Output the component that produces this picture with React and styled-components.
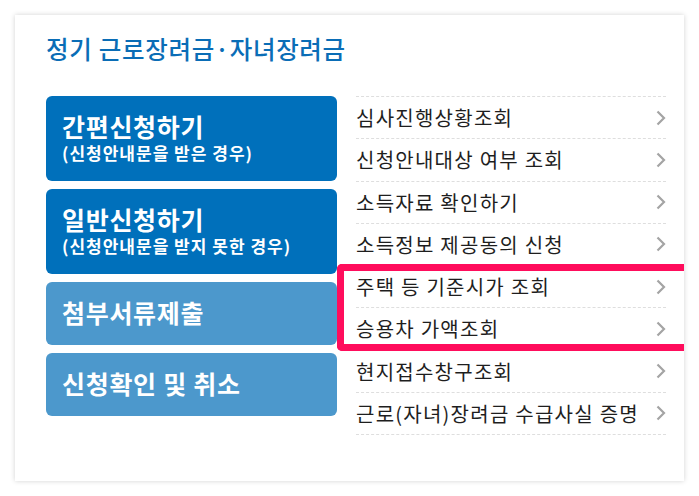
import React from "react";
import styled, { createGlobalStyle } from "styled-components";

const Global = createGlobalStyle`
  html, body { margin: 0; padding: 0; background: #ffffff; }
  body { font-family: "Noto Sans CJK KR", "Noto Sans", sans-serif; }
  * { box-sizing: border-box; }
`;

const Page = styled.div`
  width: 699px;
  height: 496px;
  padding: 15px 15px 0 15px;
`;

const Card = styled.section`
  position: relative;
  width: 669px;
  height: 466px;
  background: #fff;
  box-shadow: 0 0 5px rgba(0, 0, 0, 0.18);
  padding: 17px 18px 0 31px;
`;

const Title = styled.h2`
  margin: 0;
  font-size: 24.5px;
  font-weight: 500;
  line-height: 34px;
  color: #0a6db6;
  letter-spacing: 0.7px;
`;

const Body = styled.div`
  display: flex;
  gap: 19px;
  margin-top: 30px;
`;

const ButtonColumn = styled.div`
  width: 291px;
  display: flex;
  flex-direction: column;
  gap: 8px;
`;

const BigButton = styled.a`
  display: flex;
  flex-direction: column;
  justify-content: center;
  height: ${(p) => p.$h}px;
  padding: 0 16px 4px;
  border-radius: 6px;
  background: ${(p) => (p.$light ? "#4c98cc" : "#0070bb")};
  color: #fff;
  text-decoration: none;
`;

const ButtonTitle = styled.span`
  display: block;
  font-size: 25px;
  font-weight: 700;
  line-height: 32px;
  letter-spacing: 0.7px;
`;

const ButtonSub = styled.span`
  display: block;
  font-size: 17px;
  font-weight: 700;
  line-height: 22px;
  letter-spacing: 1px;
`;

const List = styled.ul`
  flex: 1;
  margin: 0;
  padding: 0;
  list-style: none;
  border-top: 1px dashed #dedede;
`;

const Item = styled.li`
  display: flex;
  align-items: center;
  justify-content: space-between;
  height: 42.25px;
  border-bottom: 1px dashed #dedede;
  font-size: 20px;
  color: #1e1e1e;
  letter-spacing: 1.25px;
`;

const Highlight = styled.div`
  position: absolute;
  left: 322px;
  right: 0;
  top: 249px;
  height: 87px;
  border: 7px solid #ff0d5c;
  border-right: none;
  border-radius: 5px 0 0 5px;
  pointer-events: none;
`;

const Chevron = () => (
  <svg width="10" height="16" viewBox="0 0 10 16" aria-hidden="true">
    <polyline points="1.5,1.5 8,8 1.5,14.5" fill="none" stroke="#a4a4a4" strokeWidth="2.2" />
  </svg>
);

const items = [
  "심사진행상황조회",
  "신청안내대상 여부 조회",
  "소득자료 확인하기",
  "소득정보 제공동의 신청",
  "주택 등 기준시가 조회",
  "승용차 가액조회",
  "현지접수창구조회",
  "근로(자녀)장려금 수급사실 증명",
];

export default function App() {
  return (
    <>
      <Global />
      <Page>
        <Card>
          <Title>정기 근로장려금·자녀장려금</Title>
          <Body>
            <ButtonColumn>
              <BigButton $h={85}>
                <ButtonTitle>간편신청하기</ButtonTitle>
                <ButtonSub>(신청안내문을 받은 경우)</ButtonSub>
              </BigButton>
              <BigButton $h={85}>
                <ButtonTitle>일반신청하기</ButtonTitle>
                <ButtonSub>(신청안내문을 받지 못한 경우)</ButtonSub>
              </BigButton>
              <BigButton $h={63} $light>
                <ButtonTitle>첨부서류제출</ButtonTitle>
              </BigButton>
              <BigButton $h={63} $light>
                <ButtonTitle>신청확인 및 취소</ButtonTitle>
              </BigButton>
            </ButtonColumn>
            <List>
              {items.map((t) => (
                <Item key={t}>
                  <span>{t}</span>
                  <Chevron />
                </Item>
              ))}
            </List>
          </Body>
          <Highlight />
        </Card>
      </Page>
    </>
  );
}
